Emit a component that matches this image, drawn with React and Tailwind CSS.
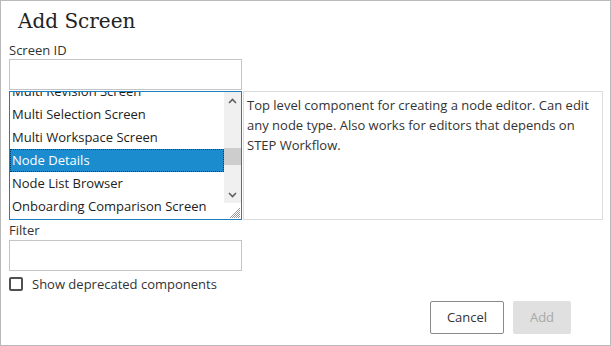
import React from "react";

const items = [
  "Multi Revision Screen",
  "Multi Selection Screen",
  "Multi Workspace Screen",
  "Node Details",
  "Node List Browser",
  "Onboarding Comparison Screen",
];

function ScrollBar() {
  return (
    <div className="w-[17px] h-full flex flex-col">
      <div className="bg-[#f0f0f0] flex-1 flex flex-col">
        <div className="h-[17px] flex items-center justify-center">
          <svg width="9" height="6" viewBox="0 0 9 6">
            <path d="M1 5 L4.5 1.5 L8 5" fill="none" stroke="#606060" strokeWidth="1.6" />
          </svg>
        </div>
        <div className="h-[39px]" />
        <div className="h-[17px] bg-[#cdcdcd]" />
        <div className="flex-1" />
        <div className="h-[17px] flex items-center justify-center">
          <svg width="9" height="6" viewBox="0 0 9 6">
            <path d="M1 1 L4.5 4.5 L8 1" fill="none" stroke="#606060" strokeWidth="1.6" />
          </svg>
        </div>
      </div>
      <div className="h-[16px] flex items-end justify-end">
        <svg width="14" height="14" viewBox="0 0 14 14">
          <path d="M13 3 L3 13 M13 7 L7 13 M13 11 L11 13 M13 5 L5 13 M13 9 L9 13" stroke="#9a9a9a" strokeWidth="1" />
        </svg>
      </div>
    </div>
  );
}

export default function App() {
  return (
    <div
      className="w-[611px] h-[346px] border border-[#b9b9b9] bg-white text-[#333] pl-[8px] flex flex-col"
      style={{ fontFamily: '"Open Sans", "Noto Sans", sans-serif' }}
    >
      <h1
        className="pl-[9px] pt-[7px] h-[40px] text-[20px] leading-[26px] text-[#222]"
        style={{ fontFamily: '"DejaVu Serif", "Liberation Serif", serif' }}
      >
        Add Screen
      </h1>
      <label className="text-[13px] leading-[18px] h-[18px]">Screen ID</label>
      <input className="w-[233px] h-[31px] border border-[#c4c4c4] outline-none px-2 text-[13px]" />
      <div className="flex mt-[1px] h-[129px]">
        <div className="w-[233px] h-full border border-[#1c7fc0] flex overflow-hidden">
          <div className="flex-1 overflow-hidden">
            <ul className="-mt-[12px]">
              {items.map((it) => (
                <li
                  key={it}
                  className={
                    it === "Node Details"
                      ? "h-[23px] leading-[23px] pl-[2px] text-[13px] whitespace-nowrap bg-[#1b8dcf] text-white outline outline-1 outline-dotted outline-offset-[-1px] outline-[#0b3b5c]"
                      : "h-[23px] leading-[23px] pl-[2px] text-[13px] whitespace-nowrap text-[#222]"
                  }
                >
                  {it}
                </li>
              ))}
            </ul>
          </div>
          <ScrollBar />
        </div>
        <div className="ml-[1px] w-[360px] h-full border border-[#dcdcdc] px-[3px] pt-[3px] text-[13px] leading-[20px]">
          Top level component for creating a node editor. Can edit any node type. Also works for editors that depends on STEP Workflow.
        </div>
      </div>
      <label className="mt-[1px] text-[13px] leading-[18px] h-[19px]">Filter</label>
      <input className="w-[233px] h-[31px] border border-[#c4c4c4] outline-none px-2 text-[13px]" />
      <div className="flex items-center mt-[6px] h-[14px]">
        <span className="w-[14px] h-[14px] border-2 border-[#505050] rounded-[2px] bg-white" />
        <span className="ml-[9px] text-[13px] leading-[18px]">Show deprecated components</span>
      </div>
      <div className="flex justify-end gap-[9px] mt-[10px] pr-[39px]">
        <button className="w-[74px] h-[33px] border border-[#8a8a8a] rounded-[2px] bg-white text-[13px] text-[#333]">
          Cancel
        </button>
        <button className="w-[58px] h-[33px] rounded-[2px] bg-[#e0e0e0] text-[13px] text-[#a8a8a8]">
          Add
        </button>
      </div>
    </div>
  );
}
